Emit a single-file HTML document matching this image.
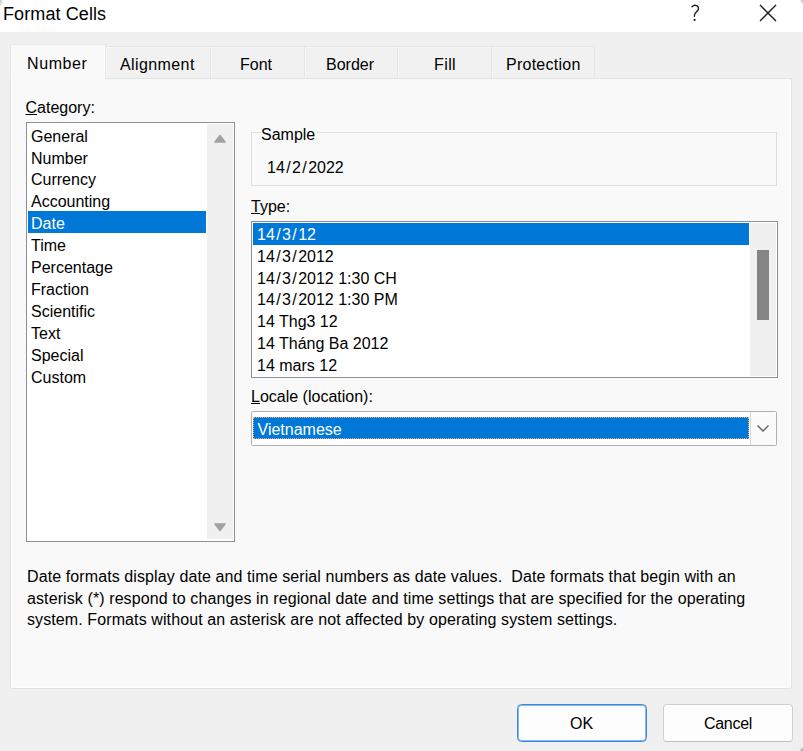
<!DOCTYPE html>
<html><head><meta charset="utf-8">
<style>
html,body{margin:0;padding:0;}
body{width:803px;height:751px;overflow:hidden;position:relative;background:#f0f0f0;font-family:"Liberation Sans",sans-serif;font-size:16px;color:#000;}
.a{position:absolute;}
.t{position:absolute;white-space:nowrap;line-height:20px;}
#title{left:0;top:0;width:803px;height:32px;background:#fff;}
#panel{left:10px;top:78px;width:780px;height:609px;background:#f9f9f9;border:1px solid #e2e2e2;border-radius:0 0 2px 2px;box-shadow:inset 1px 0 0 #fdfdfd, inset -1px -1px 0 #fdfdfd;}
.tab{position:absolute;top:46px;height:32px;background:#f1f1f1;border:1px solid #e6e6e6;box-shadow:inset 1px 1px 0 #f6f6f6;border-bottom:none;box-sizing:border-box;}
#tab0{left:10px;top:44px;width:96px;height:35px;background:#f9f9f9;z-index:2;border-color:#e8e8e8;box-shadow:none;}
.lb{position:absolute;background:#fff;border:1px solid #8c8f96;box-sizing:border-box;}
.row{position:absolute;left:0;height:22px;line-height:22px;white-space:nowrap;}
.sel{background:#0078d7;color:#fff;}
.sl{padding:0 1.4px;}
.btn{position:absolute;background:#fdfdfd;box-sizing:border-box;border-radius:4px;}
u{text-decoration:underline;text-decoration-thickness:1px;text-underline-offset:0.6px;}
</style></head>
<body>
<div class="a" id="title"></div>
<div class="t" style="left:3px;top:-0.5px;font-size:18px;line-height:28px;letter-spacing:0.1px;">Format Cells</div>
<svg class="a" style="left:686px;top:2px" width="20" height="22" viewBox="0 0 20 22"><path d="M6 4.7 C7.2 3.4 9.4 3 11 3.8 C12.9 4.8 12.9 7.4 11.4 8.9 C9.6 10.7 8.4 11.4 8.4 13.4 L8.4 14.2" stroke="#1a1a1a" stroke-width="1.35" fill="none" stroke-linecap="round"/><circle cx="8.6" cy="17.9" r="1.05" fill="#1a1a1a"/></svg>
<svg class="a" style="left:758px;top:3px" width="20" height="20" viewBox="0 0 20 20"><path d="M2 2 L18 18 M18 2 L2 18" stroke="#1a1a1a" stroke-width="1.4" fill="none"/></svg>

<div class="a" id="panel"></div>
<div class="tab" id="tab0"></div>
<div class="tab" style="left:105px;width:106px;"></div>
<div class="tab" style="left:210px;width:95px;"></div>
<div class="tab" style="left:304px;width:94px;"></div>
<div class="tab" style="left:397px;width:95px;"></div>
<div class="tab" style="left:491px;width:104px;"></div>
<div class="t" style="left:27px;top:53.5px;z-index:3;letter-spacing:0.6px;">Number</div>
<div class="t" style="left:120px;top:55px;letter-spacing:0.4px;">Alignment</div>
<div class="t" style="left:240px;top:55px;">Font</div>
<div class="t" style="left:326px;top:55px;">Border</div>
<div class="t" style="left:434px;top:55px;letter-spacing:0.4px;">Fill</div>
<div class="t" style="left:506px;top:55px;letter-spacing:0.25px;">Protection</div>

<div class="t" style="left:25.5px;top:97.5px;"><u>C</u>ategory:</div>
<div class="lb" style="left:26px;top:122px;width:209px;height:420px;">
  <div class="a" style="left:180px;top:1px;width:26px;height:415px;background:#f0f0f0;"></div>
  <svg class="a" style="left:186px;top:9.5px" width="14" height="11"><path d="M2 9 L7 2.5 L12 9 Z" fill="#a3a3a3" stroke="#a3a3a3" stroke-width="1.6" stroke-linejoin="round"/></svg>
  <svg class="a" style="left:186px;top:398.5px" width="14" height="11"><path d="M2 2 L7 8.5 L12 2 Z" fill="#a3a3a3" stroke="#a3a3a3" stroke-width="1.6" stroke-linejoin="round"/></svg>
  <div class="a" style="left:1px;top:2.7px;width:178px;">
    <div class="row" style="top:0;left:3px">General</div>
    <div class="row" style="top:21.9px;left:3px">Number</div>
    <div class="row" style="top:43.8px;left:3px">Currency</div>
    <div class="row" style="top:65.7px;left:3px">Accounting</div>
    <div class="row sel" style="top:85.3px;left:0;width:178px;height:22px;line-height:25px;padding-left:3px;box-sizing:border-box;">Date</div>
    <div class="row" style="top:109.5px;left:3px">Time</div>
    <div class="row" style="top:131.4px;left:3px">Percentage</div>
    <div class="row" style="top:153.3px;left:3px">Fraction</div>
    <div class="row" style="top:175.2px;left:3px">Scientific</div>
    <div class="row" style="top:197.1px;left:3px">Text</div>
    <div class="row" style="top:219px;left:3px">Special</div>
    <div class="row" style="top:240.9px;left:3px">Custom</div>
  </div>
</div>

<!-- Sample group -->
<div class="a" style="left:251px;top:132px;width:524px;height:52px;border:1px solid #dedede;"></div>
<div class="t" style="left:260.5px;top:124.5px;background:#f9f9f9;padding:0 1.5px 0 0.5px;">Sample</div>
<div class="t" style="left:267px;top:157.5px;">14<span class="sl">/</span>2<span class="sl">/</span>2022</div>

<div class="t" style="left:251px;top:196.5px;"><u>T</u>ype:</div>
<div class="lb" style="left:251px;top:221px;width:527px;height:157px;">
  <div class="a" style="left:498px;top:1px;width:26px;height:153px;background:#f0f0f0;"></div>
  <div class="a" style="left:505px;top:28px;width:12px;height:70px;background:#858585;"></div>
  <div class="a" style="left:1px;top:1px;width:496px;">
    <div class="row sel" style="top:0;width:496px;height:21.5px;padding-left:4px;box-sizing:border-box;line-height:24px;">14<span class="sl">/</span>3<span class="sl">/</span>12</div>
    <div class="row" style="top:22.8px;left:4px">14<span class="sl">/</span>3<span class="sl">/</span>2012</div>
    <div class="row" style="top:44.6px;left:4px">14<span class="sl">/</span>3<span class="sl">/</span>2012 1:30 CH</div>
    <div class="row" style="top:66.4px;left:4px">14<span class="sl">/</span>3<span class="sl">/</span>2012 1:30 PM</div>
    <div class="row" style="top:88.2px;left:4px">14 Thg3 12</div>
    <div class="row" style="top:110px;left:4px">14 Tháng Ba 2012</div>
    <div class="row" style="top:131.8px;left:4px">14 mars 12</div>
  </div>
</div>

<div class="t" style="left:251px;top:386.5px;"><u>L</u>ocale (location):</div>
<div class="a" style="left:251px;top:411px;width:526px;height:35px;border:1px solid #b0b0b0;border-radius:1.5px;box-sizing:border-box;background:#fff;">
  <div class="a" style="left:1px;top:5px;width:496px;height:22px;background:#0078d7;color:#fff;line-height:24.5px;padding-left:3.5px;box-sizing:border-box;border:1px dotted #eeaa66;">Vietnamese</div>
  <div class="a" style="left:498px;top:0;width:25px;height:33px;border-left:1px solid #d9d9d9;background:#fbfbfb;"></div>
  <svg class="a" style="left:504px;top:12px" width="14" height="9"><path d="M1.5 1.5 L7 7 L12.5 1.5" stroke="#606060" stroke-width="1.4" fill="none"/></svg>
</div>

<div class="t" style="left:27px;top:566px;line-height:21.7px;letter-spacing:0.1px;">Date formats display date and time serial numbers as date values.&nbsp; Date formats that begin with an<br>asterisk (*) respond to changes in regional date and time settings that are specified for the operating<br>system. Formats without an asterisk are not affected by operating system settings.</div>

<div class="btn" style="left:517px;top:704px;width:130px;height:38px;border:1px solid #3a88dc;border-radius:4.5px;box-shadow:inset 0 0 0 1px rgba(60,140,222,0.6);"></div>
<div class="t" style="left:570px;top:714px;">OK</div>
<div class="btn" style="left:663px;top:704px;width:130px;height:38px;border:1px solid #d0d0d0;border-bottom-color:#bdbdbd;"></div>
<div class="t" style="left:704px;top:714px;letter-spacing:-0.3px;">Cancel</div>
<div class="a" style="left:-2px;top:-2px;width:5px;height:9px;border-radius:50%;background:radial-gradient(ellipse at 30% 30%, rgba(110,110,110,0.5), rgba(110,110,110,0) 75%);"></div>
<div class="a" style="left:799px;top:-3px;width:8px;height:8px;background:radial-gradient(circle at 70% 30%, rgba(90,90,90,0.6), rgba(90,90,90,0) 70%);"></div>
<div class="a" style="left:798px;top:746px;width:8px;height:8px;background:radial-gradient(circle at 80% 80%, rgba(60,60,60,0.8), rgba(60,60,60,0) 65%);"></div>
</body></html>
